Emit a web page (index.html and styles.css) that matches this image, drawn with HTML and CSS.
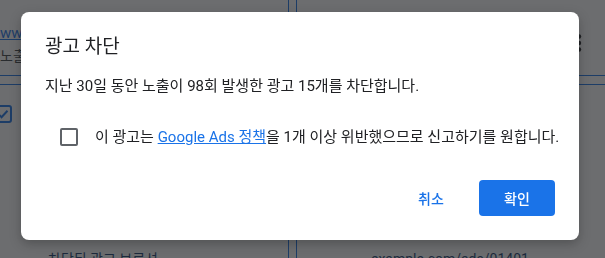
FILE: index.html
```html
<!DOCTYPE html>
<html lang="ko">
<head>
<meta charset="utf-8">
<title>광고 차단</title>
<link rel="stylesheet" href="styles.css">
</head>
<body>
<div class="page">
  <div class="row row-top">
    <div class="cell cell-left">
      <a class="site-link" href="#">www.example.co.kr</a>
      <div class="muted">노출 98회</div>
    </div>
    <div class="gap"></div>
    <div class="cell cell-right">
      <svg class="kebab" width="6" height="18" viewBox="0 0 6 18"><circle cx="3" cy="2.5" r="2.2"/><circle cx="3" cy="9" r="2.2"/><circle cx="3" cy="15.5" r="2.2"/></svg>
    </div>
  </div>
  <div class="sep"></div>
  <div class="row row-mid">
    <div class="cell cell-left">
      <span class="page-check">
        <svg width="18" height="18" viewBox="0 0 18 18"><rect x="1" y="1" width="16" height="16" rx="2" fill="none" stroke="#1a73e8" stroke-width="2"/><path d="M4.5 9.2l3 3 6-6.4" fill="none" stroke="#1a73e8" stroke-width="2"/></svg>
      </span>
    </div>
    <div class="gap"></div>
    <div class="cell cell-right"></div>
  </div>
  <div class="row row-bottom">
    <div class="cell cell-left"><span class="bottom-text">차단된 광고 브로셔</span></div>
    <div class="gap"></div>
    <div class="cell cell-right"><span class="bottom-text bottom-right">example.com/ads/01401</span></div>
  </div>
</div>

<div class="overlay">
  <div class="dialog" role="dialog">
    <h1 class="title">광고 차단</h1>
    <p class="body-text">지난 30일 동안 노출이 98회 발생한 광고 15개를 차단합니다.</p>
    <label class="check-row">
      <span class="checkbox"></span>
      <span class="check-label">이 광고는 <a href="#" class="policy">Google Ads 정책</a>을 1개 이상 위반했으므로 신고하기를 원합니다.</span>
    </label>
    <div class="actions">
      <button class="btn btn-text">취소</button>
      <button class="btn btn-primary">확인</button>
    </div>
  </div>
</div>
</body>
</html>
```

FILE: styles.css
```css
* { box-sizing: border-box; }

html, body {
  margin: 0;
  padding: 0;
  width: 605px;
  height: 258px;
  overflow: hidden;
  background: #ffffff;
  font-family: "Roboto", "Noto Sans CJK KR", sans-serif;
  color: #202124;
}

/* background page */
.page {
  display: flex;
  flex-direction: column;
  width: 605px;
  height: 258px;
  overflow: hidden;
}

.row {
  display: grid;
  grid-template-columns: 289px 7px 1fr;
}

.row-top { height: 75px; flex: none; }
.row-mid { height: 155px; flex: none; }
.row-bottom { flex: 1; min-height: 0; overflow: hidden; }

.cell-left { border-right: 1px solid #1a73e8; }
.cell-right { border-left: 1px solid #1a73e8; }

.sep {
  flex: none;
  height: 10px;
  border-top: 1px solid #1a73e8;
  border-bottom: 1px solid #1a73e8;
}

.row-top .cell-left {
  padding-top: 25px;
}

.site-link {
  display: block;
  font-size: 15px;
  line-height: 16px;
  color: #1a73e8;
  text-decoration: underline;
}

.muted {
  margin-top: 7px;
  font-size: 14px;
  line-height: 16px;
  color: #3c4043;
}

.row-top .cell-right {
  display: flex;
  justify-content: flex-end;
  padding-top: 34px;
  padding-right: 23px;
}

.kebab { fill: #202124; }

.row-mid .cell-left { padding-top: 20px; }

.page-check {
  display: block;
  margin-left: -6px;
  width: 18px;
  height: 18px;
}

.bottom-text {
  display: block;
  padding-top: 10px;
  padding-left: 48px;
  font-size: 14px;
  line-height: 18px;
  color: #1a3d6e;
  white-space: nowrap;
}

.bottom-right { padding-left: 74px; }

/* overlay + dialog */
.overlay {
  position: fixed;
  inset: 0;
  background: rgba(32, 33, 36, 0.66);
  padding: 12px 0 0 21px;
}

.dialog {
  width: 558px;
  background: #ffffff;
  border-radius: 8px;
  padding: 24px;
  box-shadow: 0 4px 12px rgba(0, 0, 0, 0.25);
}

.title {
  margin: 0;
  font-size: 19px;
  line-height: 22px;
  font-weight: 400;
  color: #202124;
}

.body-text {
  margin: 18px 0 0;
  font-size: 15px;
  line-height: 20px;
  color: #202124;
}

.check-row {
  display: flex;
  align-items: center;
  height: 40px;
  margin-top: 21px;
  padding-left: 15px;
}

.checkbox {
  flex: none;
  width: 18px;
  height: 18px;
  border: 2px solid #5f6368;
  border-radius: 2px;
}

.check-label {
  margin-left: 17px;
  font-size: 15px;
  line-height: 20px;
  color: #202124;
  white-space: nowrap;
}

.policy {
  color: #1a73e8;
  text-decoration: underline;
}

.actions {
  display: flex;
  justify-content: flex-end;
  gap: 16px;
  margin-top: 23px;
}

.btn {
  height: 36px;
  min-width: 64px;
  padding: 0 16px;
  border: none;
  border-radius: 4px;
  font-family: "Roboto", "Noto Sans CJK KR", sans-serif;
  font-size: 14px;
  font-weight: 500;
  background: transparent;
}

.btn-text { color: #1a73e8; }

.btn-primary {
  width: 76px;
  background: #1a73e8;
  color: #ffffff;
}
```
